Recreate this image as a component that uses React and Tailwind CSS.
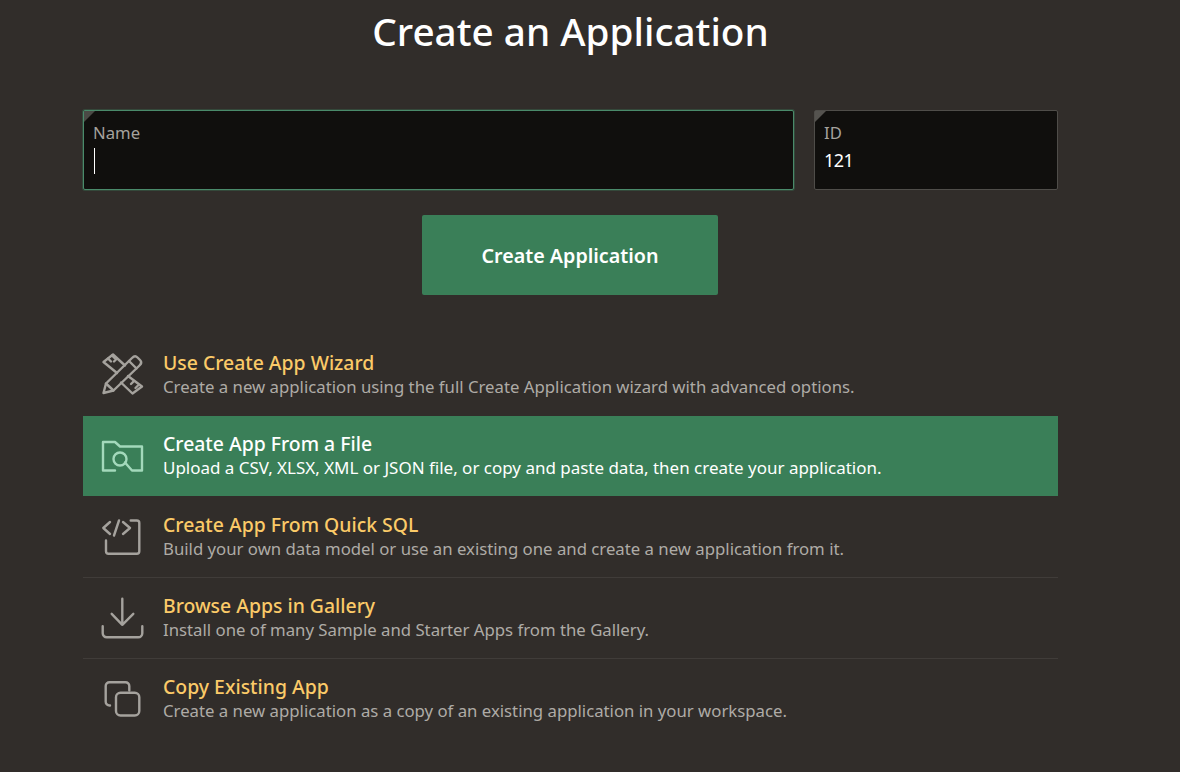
import React from "react"

const items = [
  { title: "Use Create App Wizard", desc: "Create a new application using the full Create Application wizard with advanced options.", icon: "wizard" },
  { title: "Create App From a File", desc: "Upload a CSV, XLSX, XML or JSON file, or copy and paste data, then create your application.", icon: "file", active: true },
  { title: "Create App From Quick SQL", desc: "Build your own data model or use an existing one and create a new application from it.", icon: "code" },
  { title: "Browse Apps in Gallery", desc: "Install one of many Sample and Starter Apps from the Gallery.", icon: "download" },
  { title: "Copy Existing App", desc: "Create a new application as a copy of an existing application in your workspace.", icon: "copy" }
]

function Icon({ name, active }) {
  const cls = active ? "text-[#a3d9bb]" : "text-[#a5a29d]"
  return (
    <svg width="44" height="44" viewBox="0 0 44 44" fill="none" stroke="currentColor" strokeWidth="2.4" strokeLinecap="round" strokeLinejoin="round" className={`-mt-[3px] shrink-0 ${cls}`}>
      {name === "wizard" && (
        <>
          <path d="M2.500 41l2.500-9.500L31 6c2-2 3.500-2.500 5.500-.5l2.500 2.500c2 2 1.500 3.500-.5 5.500L12.500 38.500z" />
          <path d="M28 9l7.500 7.500M5 31.500l7.500 7" />
          <path d="M16 21L2.500 10 12 2.500 24 13.500" />
          <path d="M7 6.500l3 3M11 3.500l2.500 2.500M15.500 7l-2.500 2.500" />
          <path d="M27 24l14 10.500-9.500 7L20 30.500" />
          <path d="M30 32l2.500-2.500M34.500 36l2.500-2.500" />
        </>
      )}
      {name === "file" && (
        <>
          <path d="M14 37.500H2V9h12l5 4.500h22v24H31l-7-8" />
          <circle cx="19" cy="26" r="6.500" />
        </>
      )}
      {name === "code" && (
        <>
          <path d="M9 8l-6.700 6L9 20M22 8l7 6-7 6M18 6.500l-5 15" />
          <path d="M29.700 6.500h6.100a2.500 2.500 0 0 1 2.500 2.500v28.300a2.500 2.500 0 0 1-2.500 2.500H7.500A2.500 2.500 0 0 1 5 37.300V26.500" />
        </>
      )}
      {name === "download" && (
        <>
          <path d="M21.300 3.800v26M10.700 18.800l10.600 11 11-11" />
          <path d="M1.700 31.200v7a4 4 0 0 0 4 4h31.600a4 4 0 0 0 4-4v-7" />
        </>
      )}
      {name === "copy" && (
        <>
          <rect x="15" y="16.800" width="23.300" height="22.700" rx="4.500" />
          <path d="M9 29.500H8.500a3.800 3.800 0 0 1-3.800-3.800V10a3.800 3.800 0 0 1 3.800-3.800h16a3.800 3.800 0 0 1 3.800 3.800v4.500" />
        </>
      )}
    </svg>
  )
}

function Field({ label, className, focused, children }) {
  return (
    <div className={`relative h-20 rounded-[2px] border bg-[#100f0d] pl-[9px] pt-[10px] ${focused ? "border-[#4a8a6a] shadow-[0_0_0_1px_rgba(63,154,108,0.25)]" : "border-[#4f4d49]"} ${className}`}>
      <span className={`absolute left-0 top-0 h-0 w-0 border-t-[11px] border-r-[11px] border-r-transparent ${focused ? "border-t-[#4a4a45]" : "border-t-[#55534f]"}`} />
      <div className="text-[16.700px] leading-6 text-[#a5a29d]">{label}</div>
      {children}
    </div>
  )
}

export default function App() {
  return (
    <div className="min-h-[772px] bg-[#312d2a] font-['Noto_Sans',sans-serif]">
      <div className="ml-[83px] w-[975px]">
        <h1 className="h-[110px] pt-[4px] text-center text-[38.700px] font-medium leading-[54px] text-white">
          Create an Application
        </h1>

        <div className="flex gap-5">
          <Field label="Name" className="flex-1" focused>
            <div className="ml-[1px] mt-[3px] h-[26px] w-px bg-white" />
          </Field>
          <Field label="ID" className="w-[244px]">
            <div className="mt-[1px] text-lg tracking-[-0.5px] leading-7 text-white">121</div>
          </Field>
        </div>

        <div className="mt-[25px] flex justify-center pr-px">
          <button className="h-20 w-[296px] rounded-[2px] bg-[#3a7f58] pt-[2px] text-[19.700px] font-semibold text-white">
            Create Application
          </button>
        </div>

        <ul className="mt-[40px]">
          {items.map((item, i) => (
            <li
              key={item.title}
              className={`flex items-center gap-[18px] pl-[18px] ${item.active ? "mb-px h-[80px] bg-[#3a7f58]" : "h-[81px]"} ${i > 1 ? "border-b border-[#403c39] last:border-b-0" : ""}`}
            >
              <Icon name={item.icon} active={item.active} />
              <div className={item.active ? "-mt-[2px] pt-px" : "-mt-[2px]"}>
                <div className={`text-[19.400px] font-medium leading-[25px] ${item.active ? "text-white" : "text-[#fbca68]"}`}>{item.title}</div>
                <div className={`leading-[24px] ${item.active ? "text-[16.980px] text-white" : "text-[16.750px] text-[#aeaba6]"}`}>{item.desc}</div>
              </div>
            </li>
          ))}
        </ul>
      </div>
    </div>
  )
}
